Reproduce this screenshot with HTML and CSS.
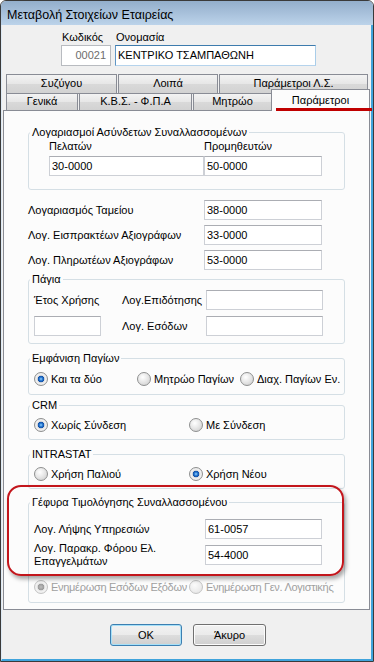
FILE: index.html
```html
<!DOCTYPE html>
<html lang="el">
<head>
  <meta charset="UTF-8">
  <title>Μεταβολή Στοιχείων Εταιρείας</title>
  <link rel="stylesheet" href="styles.css">
</head>
<body>
  <div class="window">
    <div class="titlebar">Μεταβολή Στοιχείων Εταιρείας</div>
    <div class="client">
      <div class="company">
        <div class="field">
          <span class="field-label">Κωδικός</span>
          <span class="textbox code">00021</span>
        </div>
        <div class="field">
          <span class="field-label">Ονομασία</span>
          <span class="textbox name">ΚΕΝΤΡΙΚΟ ΤΣΑΜΠΑΘΩΝΗ</span>
        </div>
      </div>

      <div class="tabs">
        <div class="tab-row">
          <div class="tab w-syz">Συζύγου</div>
          <div class="tab w-loipa">Λοιπά</div>
          <div class="tab w-parls">Παράμετροι Λ.Σ.</div>
        </div>
        <div class="tab-row lower">
          <div class="tab w-gen">Γενικά</div>
          <div class="tab w-kbs">Κ.Β.Σ. - Φ.Π.Α</div>
          <div class="tab w-mitr">Μητρώο</div>
          <div class="tab active">Παράμετροι</div>
        </div>
      </div>

      <div class="panel">
        <div class="group g-asyndetoi">
          <div class="group-title">Λογαριασμοί Ασύνδετων Συναλλασσομένων</div>
          <div class="pair labels">
            <span>Πελατών</span>
            <span>Προμηθευτών</span>
          </div>
          <div class="pair inputs">
            <span class="textbox">30-0000</span>
            <span class="textbox">50-0000</span>
          </div>
        </div>

        <div class="row first">
          <span>Λογαριασμός Ταμείου</span>
          <span class="textbox">38-0000</span>
        </div>
        <div class="row">
          <span>Λογ. Εισπρακτέων Αξιογράφων</span>
          <span class="textbox">33-0000</span>
        </div>
        <div class="row">
          <span>Λογ. Πληρωτέων Αξιογράφων</span>
          <span class="textbox">53-0000</span>
        </div>

        <div class="group g-pagia">
          <div class="group-title">Πάγια</div>
          <div class="pagia-grid">
            <span>Έτος Χρήσης</span>
            <span>Λογ.Επιδότησης</span>
            <span class="textbox"></span>
            <span class="textbox"></span>
            <span>Λογ. Εσόδων</span>
            <span class="textbox"></span>
          </div>
        </div>

        <div class="group g-emfanisi">
          <div class="group-title">Εμφάνιση Παγίων</div>
          <div class="radios three">
            <span class="radio checked">Και τα δύο</span>
            <span class="radio">Μητρώο Παγίων</span>
            <span class="radio">Διαχ. Παγίων Εν.</span>
          </div>
        </div>

        <div class="group g-crm">
          <div class="group-title">CRM</div>
          <div class="radios two">
            <span class="radio checked">Χωρίς Σύνδεση</span>
            <span class="radio">Με Σύνδεση</span>
          </div>
        </div>

        <div class="group g-intrastat">
          <div class="group-title">INTRASTAT</div>
          <div class="radios two">
            <span class="radio">Χρήση Παλιού</span>
            <span class="radio checked">Χρήση Νέου</span>
          </div>
        </div>

        <div class="group g-gefyra">
          <div class="group-title">Γέφυρα Τιμολόγησης Συναλλασσομένου</div>
          <div class="bridge-row">
            <span>Λογ. Λήψης Υπηρεσιών</span>
            <span class="textbox">61-0057</span>
          </div>
          <div class="bridge-row tall">
            <span>Λογ. Παρακρ. Φόρου Ελ.<br>Επαγγελμάτων</span>
            <span class="textbox">54-4000</span>
          </div>
          <div class="radios two bridge-radios">
            <span class="radio checked disabled">Ενημέρωση Εσόδων Εξόδων</span>
            <span class="radio disabled">Ενημέρωση Γεν. Λογιστικής</span>
          </div>
        </div>

        <div class="highlight"></div>
      </div>

      <div class="buttons">
        <button class="btn default">OK</button>
        <button class="btn">Άκυρο</button>
      </div>
    </div>
  </div>
</body>
</html>
```

FILE: styles.css
```css
:root {
  --face: #f0f0f0;
  --page: #fcfcfc;
  --tab-border: #898c95;
  --group-border: #d5dfe5;
  --box-border: #b9bcc3;
  --mark: #c3161c;
  --font: "Liberation Sans", Arial, sans-serif;
}

* {
  box-sizing: border-box;
  margin: 0;
  padding: 0;
}

body {
  font-family: var(--font);
  font-size: 11px;
  line-height: 13px;
  color: #000;
  background: #fff;
}

.window {
  width: 374px;
  height: 662px;
  border: 1px solid #3a3a3a;
  border-radius: 6px 6px 0 0;
  overflow: hidden;
  display: flex;
  flex-direction: column;
  background: var(--face);
}

.titlebar {
  height: 24px;
  flex: none;
  padding: 2px 0 0 6px;
  font-size: 12.5px;
  line-height: 24px;
  background: linear-gradient(#93aecb, #bcd3ea);
}

.client {
  flex: 1;
  padding-top: 6px;
  border-left: 1px solid #dde9f4;
  border-right: 2px solid #40a4dc;
  border-bottom: 2px solid #40a4dc;
  background: var(--face);
}

/* header: code + name */
.company {
  display: flex;
  gap: 4px;
  padding-left: 59px;
}

.field {
  display: flex;
  flex-direction: column;
}

.field-label {
  padding-left: 1px;
}

.textbox {
  display: block;
  height: 20px;
  padding: 0 2px;
  line-height: 18px;
  background: #fff;
  border: 1px solid #cdd0d6;
  border-top-color: #abadb3;
  white-space: nowrap;
}

.field .textbox {
  height: 21px;
  margin-top: 1px;
  line-height: 19px;
}

.textbox.code {
  width: 50px;
  padding-right: 4px;
  text-align: right;
  color: #6d6d6d;
  border-color: #b8bbc0;
}

.textbox.name {
  width: 201px;
  border-color: #3d7bad #a9cde9 #b5d3ec #5f95c4;
}

/* tabs */
.tabs {
  margin: 8px 0 0 4px;
}

.tab-row {
  display: flex;
  gap: 1px;
}

.tab {
  height: 20px;
  padding-top: 2px;
  text-align: center;
  border: 1px solid var(--tab-border);
  background: linear-gradient(#f3f3f3, #e6e6e6 50%, #d9d9d9 51%, #d2d2d2);
}

.tab-row.lower {
  margin-top: -5px;
  align-items: flex-end;
}

.tab-row.lower .tab {
  height: 17px;
  padding-top: 1px;
  border-bottom: 0;
}

.w-syz { width: 111px; }
.w-loipa { width: 100px; }
.w-parls { width: 149px; }
.w-gen { width: 72px; }
.w-kbs { width: 113px; }
.w-mitr { width: 79px; }

.tab-row.lower .tab.active {
  position: relative;
  z-index: 1;
  width: 99px;
  height: 22px;
  margin: 0 0 -1px -2px;
  padding-top: 4px;
  background: var(--page);
}

.tab.active::after {
  content: "";
  position: absolute;
  left: 4px;
  right: -3px;
  bottom: 0;
  height: 3px;
  background: #c00000;
}

/* tab page */
.panel {
  position: relative;
  height: 500px;
  margin: 0 1px;
  padding: 0 24px;
  border: 1px solid var(--tab-border);
  background: var(--page);
}

.group {
  border: 1px solid var(--group-border);
  border-radius: 3px;
}

.group-title {
  width: max-content;
  margin: -7px 0 0 1px;
  padding: 0 2px;
  background: var(--page);
}

.g-asyndetoi {
  margin-top: 21px;
  padding-bottom: 13px;
}

.pair {
  display: grid;
  grid-template-columns: 155px 118px;
  margin-left: 20px;
}

.pair.labels {
  margin-top: 1px;
}

.pair.inputs {
  margin-top: 3px;
}

.row {
  display: grid;
  grid-template-columns: 176px 118px;
  align-items: center;
  margin-top: 5px;
}

.row.first {
  margin-top: 10px;
}

.g-pagia {
  margin-top: 9px;
  padding-bottom: 7px;
}

.pagia-grid {
  display: grid;
  grid-template-columns: 88px 84px 117px;
  grid-auto-rows: 20px;
  row-gap: 6px;
  align-items: center;
  margin: 4px 0 0 5px;
}

.pagia-grid .textbox:nth-child(4) {
  width: 67px;
}

.g-emfanisi {
  margin-top: 14px;
  padding-bottom: 8px;
}

.g-crm {
  margin-top: 10px;
  padding-bottom: 7px;
}

.g-intrastat {
  margin-top: 14px;
  padding-bottom: 7px;
}

.g-gefyra {
  margin-top: 13px;
  padding-bottom: 8px;
}

.radios {
  display: grid;
  margin: 6px 0 0 5px;
}

.g-emfanisi .radios {
  margin-top: 7px;
}

.radios.three {
  grid-template-columns: 103px 103px auto;
}

.radios.two {
  grid-template-columns: 155px auto;
}

.radio {
  display: flex;
  align-items: center;
  gap: 3px;
  white-space: nowrap;
}

.radio::before {
  content: "";
  flex: none;
  width: 12px;
  height: 12px;
  border: 1px solid #8e8f8f;
  border-radius: 50%;
  background: radial-gradient(circle at 40% 35%, #fff 0, #e8e8e8 45%, #c9c9c9 100%);
}

.radio.checked::before {
  background: radial-gradient(circle at 50% 50%, #9ad7ff 0, #2f7fd6 1.5px, #0e4ea6 3px, #dedede 3.6px, #f2f2f2 5px, #cfcfcf 100%);
}

.radio.disabled {
  color: #a0a0a0;
}

.radio.disabled::before {
  border-color: #c4c4c4;
  background: radial-gradient(circle at 40% 35%, #fbfbfb 0, #ececec 60%, #dcdcdc 100%);
}

.radio.checked.disabled::before {
  background: radial-gradient(circle at 50% 50%, #bdbdbd 0, #9a9a9a 3px, #e4e4e4 3.6px, #f4f4f4 5px, #dadada 100%);
}

.bridge-row {
  display: grid;
  grid-template-columns: 171px 117px;
  align-items: center;
  margin: 10px 0 0 5px;
}

.bridge-row.tall {
  margin-top: 3px;
}

.bridge-radios {
  margin-top: 12px;
  grid-template-columns: 156px auto;
  letter-spacing: -0.3px;
}

/* red annotation around the bridge settings */
.highlight {
  position: absolute;
  left: 3px;
  top: 374px;
  width: 337px;
  height: 91px;
  border: 2px solid var(--mark);
  border-radius: 14px;
  box-shadow: 2px 3px 4px rgba(0, 0, 0, 0.35);
}

/* dialog buttons */
.buttons {
  display: flex;
  gap: 11px;
  margin-top: 14px;
  padding-left: 108px;
}

.btn {
  width: 73px;
  height: 22px;
  font-family: var(--font);
  font-size: 11px;
  color: #000;
  border: 1px solid #707070;
  border-radius: 3px;
  background: linear-gradient(#f2f2f2, #ebebeb 50%, #dddddd 51%, #cfcfcf);
  box-shadow: inset 0 0 0 1px #fcfcfc;
}

.btn.default {
  width: 72px;
  border-color: #3c7fb1;
  box-shadow: inset 0 0 0 1px #a6e0f8;
}
```
